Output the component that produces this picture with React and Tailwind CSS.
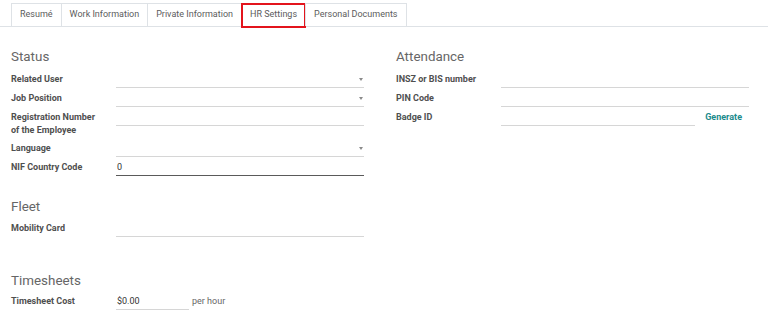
const TABS = ['Resumé', 'Work Information', 'Private Information', 'HR Settings', 'Personal Documents']

function Tab({ label, marked }) {
  return (
    <div className="relative -ml-px first:ml-0 h-[23px] px-[8px] border border-b-0 border-[#dee2e6] bg-white flex items-center text-[9px] text-[#5c5c5c] whitespace-nowrap">
      {label}
      {marked && <span className="absolute -left-px -top-px -right-px -bottom-[2px] border-2 border-[#e3141c]" />}
    </div>
  )
}

function Caret() {
  return <span className="mt-[8px] mr-[1px] w-0 h-0 border-l-[2.5px] border-r-[2.5px] border-t-[3px] border-l-transparent border-r-transparent border-t-[#8a8a8a]" />
}

// one label + underlined field
function Row({ label, value, select, focused, extra, fieldClass = 'flex-1' }) {
  return (
    <div className="flex items-start mb-px">
      <div className="w-[105px] shrink-0 pt-[3px] pb-px leading-[13px] text-[9px] font-bold text-[#4f4f4f]">{label}</div>
      <div className={`${fieldClass} h-[18px] border-b flex justify-between items-start ${focused ? 'border-[#5a5a5a]' : 'border-[#d6d6d6]'}`}>
        <span className="pl-px pt-[3px] leading-[13px] text-[9px] text-[#333]">{value}</span>
        {select && <Caret />}
      </div>
      {extra}
    </div>
  )
}

function Heading({ children, className = '' }) {
  return <div className={`text-[13.4px] leading-[16px] text-[#666] ${className}`}>{children}</div>
}

export default function App() {
  return (
    <div className="w-[768px] h-[326px] bg-white overflow-hidden font-['Roboto','Liberation_Sans',sans-serif]">
      <div className="flex pl-[11px] pt-[3px] border-b border-[#dee2e6]">
        {TABS.map((t) => <Tab key={t} label={t} marked={t === 'HR Settings'} />)}
      </div>

      <div className="pl-[11px] pr-[19px] pt-[22px]">
        <div className="grid grid-cols-2 gap-x-8">
          <div>
            <Heading className="mb-[5px]">Status</Heading>
            <Row label="Related User" select />
            <Row label="Job Position" select />
            <Row label={<>Registration Number<br />of the Employee</>} />
            <Row label="Language" select />
            <Row label="NIF Country Code" value="0" focused />
          </div>
          <div>
            <Heading className="mb-[5px]">Attendance</Heading>
            <Row label="INSZ or BIS number" />
            <Row label="PIN Code" />
            <Row
              label="Badge ID"
              extra={<button className="pl-[10px] pr-[7px] pt-[3px] leading-[13px] text-[9px] font-bold text-[#1b8b8c]">Generate</button>}
            />
          </div>
        </div>

        <div className="grid grid-cols-2 gap-x-8 mt-[22px]">
          <div>
            <Heading className="mb-[4px]">Fleet</Heading>
            <Row label="Mobility Card" />
          </div>
        </div>

        <div className="grid grid-cols-2 gap-x-8 mt-[35px]">
          <div>
            <Heading className="mb-[3px]">Timesheets</Heading>
            <Row
              label="Timesheet Cost"
              value="$0.00"
              fieldClass="w-[73px]"
              extra={<span className="pl-[3px] pt-[3px] leading-[13px] text-[9px] text-[#666]">per hour</span>}
            />
          </div>
        </div>
      </div>
    </div>
  )
}
